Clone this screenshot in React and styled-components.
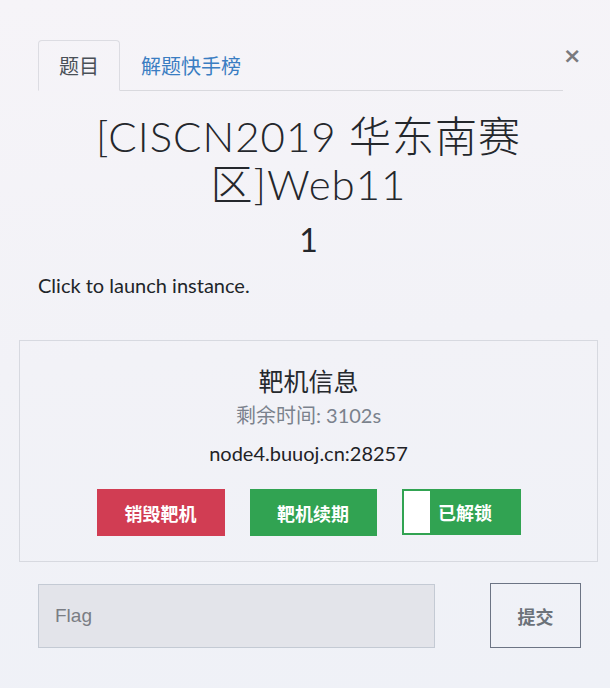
import React, { useState } from "react";
import styled, { createGlobalStyle } from "styled-components";

const GlobalStyle = createGlobalStyle`
  html, body {
    margin: 0;
    padding: 0;
  }
  body {
    background: linear-gradient(175deg, #f6f4f8 0%, #f2f2f7 50%, #eff1f7 100%);
    min-height: 688px;
    font-family: Lato, "Noto Sans CJK SC", sans-serif;
    color: #212529;
  }
`;

const Modal = styled.div`
  padding: 40px 12px 0 19px;
  box-sizing: border-box;
  width: 610px;
  min-height: 688px;
`;

const TabRow = styled.div`
  display: flex;
  align-items: flex-start;
  padding-left: 19px;
`;

const Tabs = styled.ul`
  flex: 1;
  display: flex;
  margin: 0;
  padding: 0;
  list-style: none;
  border-bottom: 1px solid #d9d9de;
`;

const Tab = styled.li`
  height: 51px;
  box-sizing: border-box;
  padding: 0 20px;
  display: flex;
  align-items: center;
  font-family: "Noto Sans CJK SC", sans-serif;
  font-size: 20px;
  cursor: pointer;
  margin-bottom: -1px;
  border: 1px solid ${(p) => (p.$active ? "#dcdce2" : "transparent")};
  border-bottom-color: ${(p) => (p.$active ? "#f5f3f8" : "transparent")};
  border-radius: 4px 4px 0 0;
  color: ${(p) => (p.$active ? "#495057" : "#3a7dc2")};
`;

const Close = styled.button`
  width: 35px;
  margin-top: 4px;
  padding: 0;
  border: none;
  background: none;
  font-family: "DejaVu Sans", sans-serif;
  font-size: 22px;
  font-weight: bold;
  line-height: 24px;
  color: #7a7a7e;
  text-align: left;
  cursor: pointer;
`;

const Title = styled.h2`
  margin: 21px 0 0;
  text-align: center;
  font-family: Lato, "Noto Sans CJK SC", sans-serif;
  font-weight: 300;
  font-size: 42px;
  line-height: 48px;
  letter-spacing: 1px;
  color: #24272c;
`;

const Value = styled.h3`
  margin: 13px 0 0;
  text-align: center;
  font-family: Lato, sans-serif;
  font-weight: 400;
  font-size: 32px;
  line-height: 38px;
  color: #24272c;
`;

const Description = styled.p`
  margin: 12px 0 0;
  padding-left: 19px;
  font-size: 20px;
  line-height: 29px;
  color: #212529;
`;

const Panel = styled.div`
  margin-top: 40px;
  border: 1px solid #d7d9e0;
  padding: 22px 0 25px;
  display: flex;
  flex-direction: column;
  align-items: center;
`;

const PanelTitle = styled.div`
  font-family: "Noto Sans CJK SC", sans-serif;
  font-size: 25px;
  line-height: 34px;
  color: #26292e;
`;

const Remaining = styled.div`
  margin-top: 4px;
  font-size: 20px;
  line-height: 28px;
  color: #7b828d;
`;

const Host = styled.div`
  margin-top: 10px;
  font-size: 20px;
  line-height: 28px;
  color: #1f2226;
`;

const ButtonRow = styled.div`
  display: flex;
  gap: 25px;
  margin-top: 22px;
`;

const ActionButton = styled.button`
  width: ${(p) => p.$width}px;
  height: 47px;
  border: none;
  background: ${(p) => p.$color};
  color: #fff;
  font-family: "Noto Sans CJK SC", sans-serif;
  font-size: 18px;
  font-weight: bold;
  cursor: pointer;
`;

const LockToggle = styled.button`
  position: relative;
  width: 119px;
  height: 46px;
  border: 2px solid #31a352;
  background: #31a352;
  color: #fff;
  font-family: "Noto Sans CJK SC", sans-serif;
  font-size: 18px;
  font-weight: bold;
  padding: 0 0 0 8px;
  cursor: pointer;
`;

const Knob = styled.span`
  position: absolute;
  left: 0;
  top: 0;
  bottom: 0;
  width: 26px;
  background: #fff;
`;

const SubmitRow = styled.div`
  display: flex;
  align-items: center;
  margin-top: 21px;
  padding-left: 19px;
`;

const FlagInput = styled.input`
  width: 397px;
  height: 64px;
  box-sizing: border-box;
  border: 1px solid #c4cad4;
  background: #e3e4ea;
  padding: 0 16px;
  font-family: "Liberation Sans", Arial, sans-serif;
  font-size: 19px;
  color: #495057;
  outline: none;
  &::placeholder {
    color: #7a7d84;
  }
`;

const SubmitButton = styled.button`
  margin-left: 55px;
  width: 91px;
  height: 65px;
  border: 1px solid #6c7484;
  background: transparent;
  color: #6c727a;
  font-family: "Noto Sans CJK SC", sans-serif;
  font-size: 18px;
  font-weight: bold;
  cursor: pointer;
`;

export default function App() {
  const [tab, setTab] = useState(0);
  const [flag, setFlag] = useState("");

  return (
    <>
      <GlobalStyle />
      <Modal>
        <TabRow>
          <Tabs>
            <Tab $active={tab === 0} onClick={() => setTab(0)}>
              题目
            </Tab>
            <Tab $active={tab === 1} onClick={() => setTab(1)}>
              解题快手榜
            </Tab>
          </Tabs>
          <Close aria-label="Close">×</Close>
        </TabRow>
        <Title>[CISCN2019 华东南赛区]Web11</Title>
        <Value>1</Value>
        <Description>Click to launch instance.</Description>
        <Panel>
          <PanelTitle>靶机信息</PanelTitle>
          <Remaining>剩余时间: 3102s</Remaining>
          <Host>node4.buuoj.cn:28257</Host>
          <ButtonRow>
            <ActionButton $width={128} $color="#d13d53">
              销毁靶机
            </ActionButton>
            <ActionButton $width={127} $color="#31a352">
              靶机续期
            </ActionButton>
            <LockToggle>
              <Knob />
              已解锁
            </LockToggle>
          </ButtonRow>
        </Panel>
        <SubmitRow>
          <FlagInput
            placeholder="Flag"
            value={flag}
            onChange={(e) => setFlag(e.target.value)}
          />
          <SubmitButton>提交</SubmitButton>
        </SubmitRow>
      </Modal>
    </>
  );
}
